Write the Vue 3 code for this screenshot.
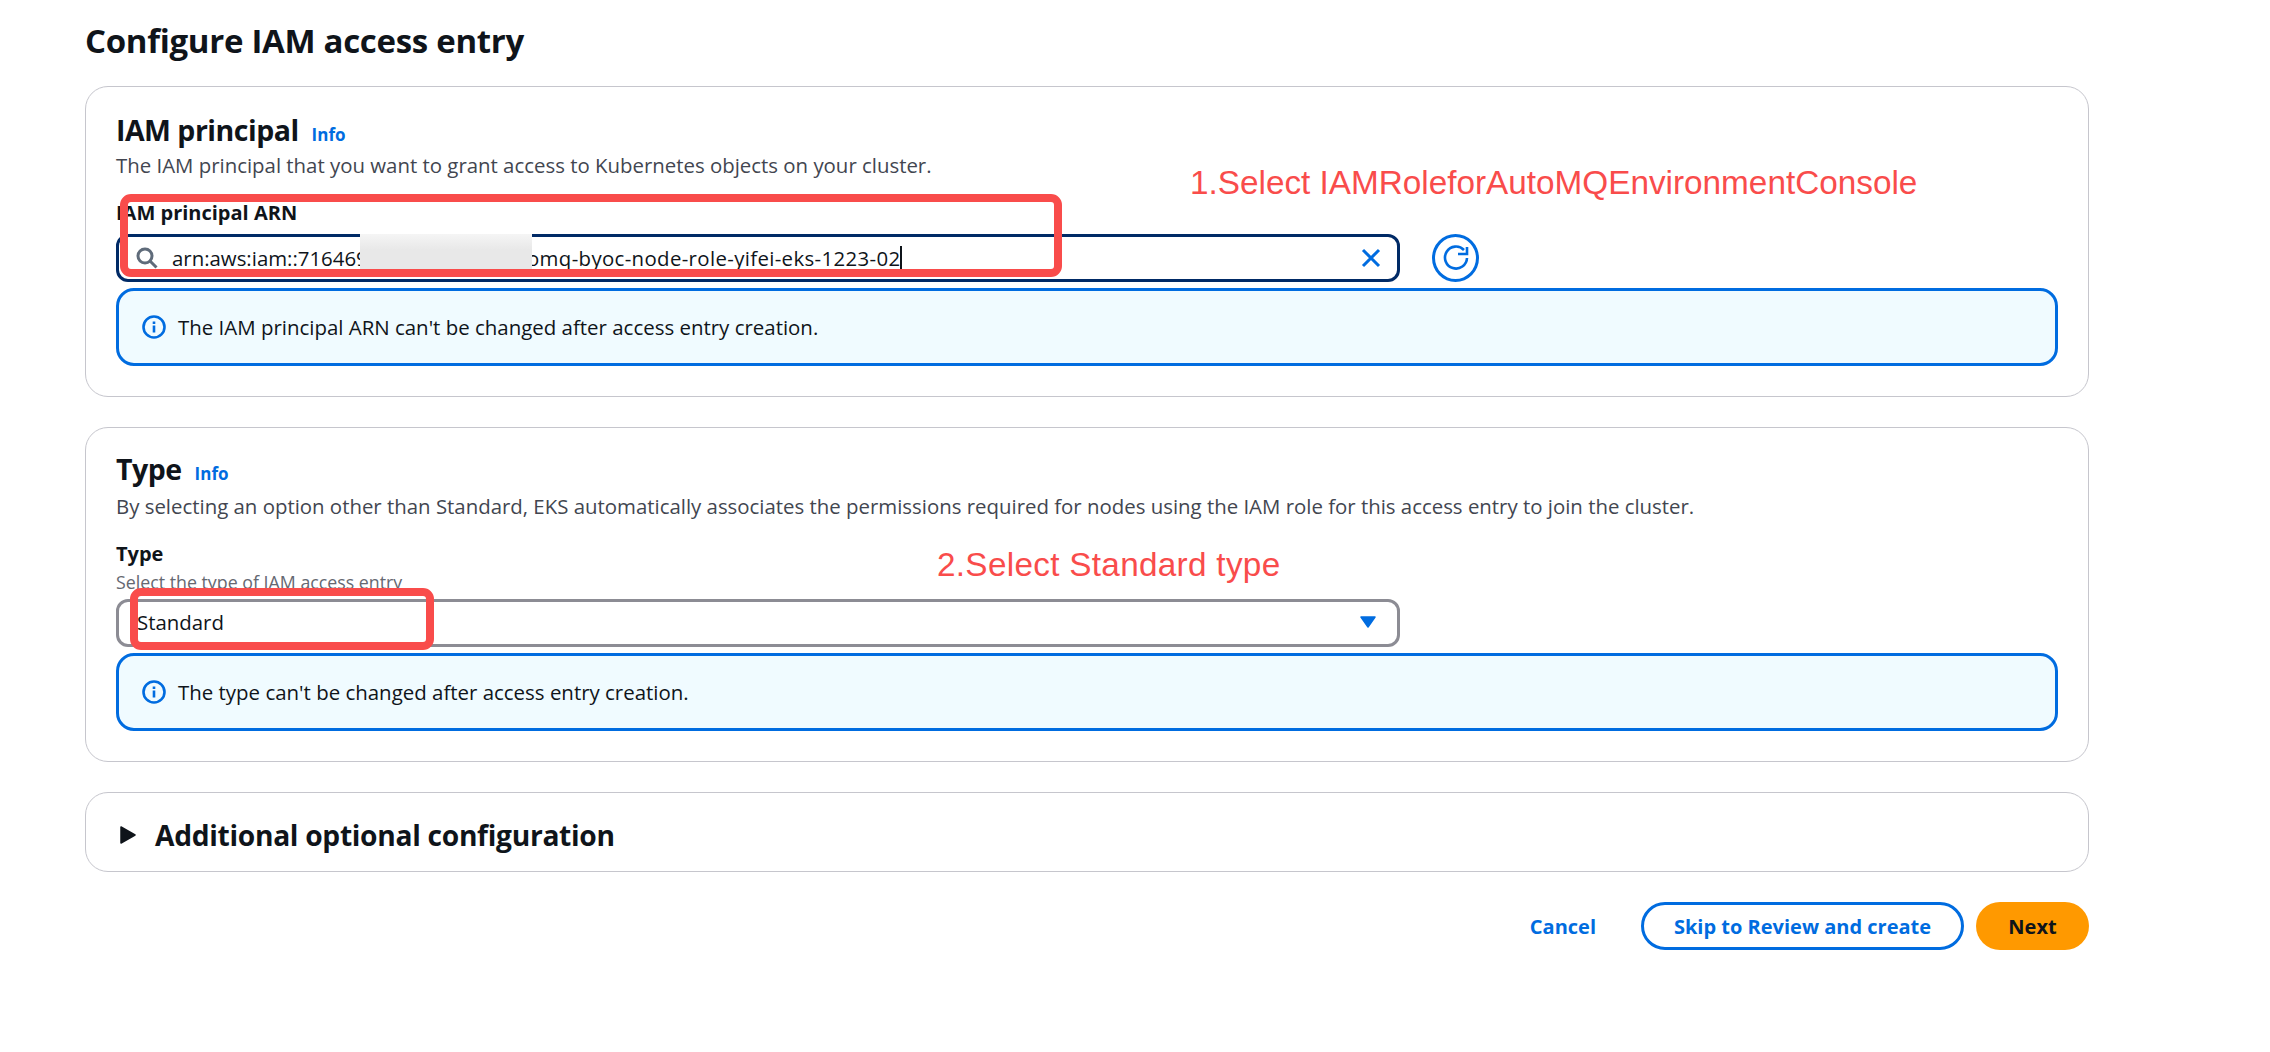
<script setup>
const alertIconPath = 'M12 10.5v7M12 6.5v2.4'
</script>

<template>
  <main class="page">
    <h1 class="title">Configure IAM access entry</h1>

    <section class="card card-principal">
      <div class="heading"><h2>IAM principal</h2><a class="info">Info</a></div>
      <p class="desc">The IAM principal that you want to grant access to Kubernetes objects on your cluster.</p>
      <div class="label label-arn">IAM principal ARN</div>
      <div class="input-row">
        <div class="input">
          <svg class="search" viewBox="0 0 22 22" width="22" height="22">
            <circle cx="9" cy="9" r="7" fill="none" stroke="#5f6b7a" stroke-width="3" />
            <path d="M14 14l6.5 6.5" stroke="#5f6b7a" stroke-width="3" fill="none" />
          </svg>
          <span class="arn-a">arn:aws:iam::716469</span><span class="arn-b">omq-byoc-node-role-yifei-eks-1223-02</span><span class="caret"></span>
          <svg class="clear" viewBox="0 0 20 20" width="20" height="20">
            <path d="M2 2l16 16M18 2L2 18" stroke="#006ce0" stroke-width="3" fill="none" />
          </svg>
        </div>
        <div class="refresh">
          <svg viewBox="0 0 30 30" width="30" height="30">
            <path d="M23 7A11 11 0 1 0 26 15" fill="none" stroke="#006ce0" stroke-width="2.6" />
            <path d="M17 11h9V4" fill="none" stroke="#006ce0" stroke-width="2.6" />
          </svg>
        </div>
      </div>
      <div class="alert">
        <svg viewBox="0 0 24 24" width="24" height="24">
          <circle cx="12" cy="12" r="10.5" fill="none" stroke="#006ce0" stroke-width="2.6" />
          <path :d="alertIconPath" stroke="#006ce0" stroke-width="2.6" fill="none" />
        </svg>
        <span>The IAM principal ARN can't be changed after access entry creation.</span>
      </div>
    </section>

    <section class="card card-type">
      <div class="heading"><h2>Type</h2><a class="info">Info</a></div>
      <p class="desc">By selecting an option other than Standard, EKS automatically associates the permissions required for nodes using the IAM role for this access entry to join the cluster.</p>
      <div class="label label-type">Type</div>
      <div class="sublabel">Select the type of IAM access entry</div>
      <div class="select">
        <span>Standard</span>
        <svg viewBox="0 0 16 12" width="16" height="12"><path d="M1 1h14L8 11z" fill="#006ce0" stroke="#006ce0" stroke-width="1.5" stroke-linejoin="round" /></svg>
      </div>
      <div class="alert">
        <svg viewBox="0 0 24 24" width="24" height="24">
          <circle cx="12" cy="12" r="10.5" fill="none" stroke="#006ce0" stroke-width="2.6" />
          <path :d="alertIconPath" stroke="#006ce0" stroke-width="2.6" fill="none" />
        </svg>
        <span>The type can't be changed after access entry creation.</span>
      </div>
    </section>

    <section class="card card-extra">
      <svg viewBox="0 0 16 18" width="16" height="18"><path d="M1 1l14 8L1 17z" fill="#0f141a" stroke="#0f141a" stroke-width="1.5" stroke-linejoin="round" /></svg>
      <h2>Additional optional configuration</h2>
    </section>

    <footer class="actions">
      <a class="cancel">Cancel</a>
      <button class="btn btn-skip">Skip to Review and create</button>
      <button class="btn btn-next">Next</button>
    </footer>

    <div class="blur"></div>
    <div class="mark mark-1"></div>
    <div class="mark mark-2"></div>
    <div class="note note-1">1.Select IAMRoleforAutoMQEnvironmentConsole</div>
    <div class="note note-2">2.Select Standard type</div>
  </main>
</template>

<style scoped>
.page {
  position: relative;
  box-sizing: border-box;
  width: 2270px;
  height: 1052px;
  padding: 21px 181px 0 85px;
  background: #fff;
  color: #0f141a;
  font-family: "Open Sans", "Noto Sans", sans-serif;
  overflow: hidden;
}
h1, h2, p { margin: 0; }
.title {
  height: 65px;
  line-height: 40px;
  font-size: 33px;
  font-weight: 700;
  letter-spacing: -0.3px;
}
.card {
  box-sizing: border-box;
  border: 1.5px solid #c6c6cd;
  border-radius: 23px;
  padding: 0 30px;
  margin-bottom: 30px;
}
.card-principal { height: 311px; padding-top: 23px; }
.card-type { height: 335px; padding-top: 21px; }
.card-extra {
  height: 80px;
  display: flex;
  align-items: center;
  gap: 19px;
  padding-left: 34px;
  padding-top: 6px;
}
.card-extra h2 { font-size: 28.2px; font-weight: 700; line-height: 40px; letter-spacing: -0.3px; }
.heading { display: flex; align-items: center; height: 40px; }
.heading h2 { font-size: 28.5px; font-weight: 700; letter-spacing: -0.5px; }
.info { margin-left: 13px; margin-top: 8px; color: #006ce0; font-size: 17px; font-weight: 700; }
.desc { height: 30px; line-height: 30px; font-size: 20.4px; color: #424650; }
.card-type .desc { margin-top: 2px; }
.label { height: 30px; line-height: 30px; font-size: 20px; font-weight: 700; }
.label-arn { margin-top: 17.5px; margin-bottom: 6px; }
.label-type { margin-top: 18px; }
.sublabel { height: 26px; line-height: 26px; margin-bottom: 3.5px; font-size: 17.8px; color: #656871; }
.input-row { display: flex; gap: 32px; }
.input {
  box-sizing: border-box;
  display: flex;
  align-items: center;
  width: 1284px;
  height: 48px;
  border: 3px solid #002a66;
  border-radius: 12px;
  padding: 0 17px;
  font-size: 20.4px;
}
.search { flex: none; margin-right: 14px; }
.arn-a { display: block; width: 192px; white-space: nowrap; }
.arn-b { margin-left: 163px; white-space: nowrap; letter-spacing: 0.35px; }
.caret { width: 2px; height: 24px; background: #0f141a; }
.clear { margin-left: auto; margin-right: -1px; }
.refresh {
  box-sizing: border-box;
  width: 47px;
  height: 48px;
  border: 3px solid #006ce0;
  border-radius: 50%;
  display: flex;
  align-items: center;
  justify-content: center;
}
.alert {
  box-sizing: border-box;
  display: flex;
  align-items: center;
  gap: 12px;
  height: 78px;
  margin-top: 6px;
  padding-left: 23px;
  border: 3px solid #006ce0;
  border-radius: 18px;
  background: #f0fbff;
  font-size: 20.45px;
}
.select {
  box-sizing: border-box;
  display: flex;
  align-items: center;
  justify-content: space-between;
  width: 1284px;
  height: 48px;
  border: 3px solid #8c8c94;
  border-radius: 12px;
  padding: 0 21px 2px 18px;
  font-size: 20.4px;
}
.actions { display: flex; align-items: center; justify-content: flex-end; }
.cancel { margin-right: 45px; color: #006ce0; font-size: 20px; font-weight: 700; }
.btn {
  box-sizing: border-box;
  height: 48px;
  border-radius: 24px;
  font-family: inherit;
  font-size: 20px;
  font-weight: 700;
}
.btn-skip { width: 323px; border: 3px solid #006ce0; background: #fff; color: #006ce0; margin-right: 12px; }
.btn-next { width: 113px; border: 0; background: #ff9900; color: #0f141a; }
.blur {
  position: absolute;
  left: 360px;
  top: 234px;
  width: 172px;
  height: 40px;
  background: linear-gradient(180deg, #f5f5f5, #e8e8e8 40%);
}
.mark {
  position: absolute;
  box-sizing: border-box;
  border: 8px solid #f94c4b;
  border-radius: 11px;
}
.mark-1 { left: 120px; top: 194px; width: 942px; height: 83px; }
.mark-2 { left: 130px; top: 588px; width: 304px; height: 62px; }
.note { position: absolute; color: #f94c4b; font-family: "Liberation Sans", Arial, sans-serif; font-size: 33.3px; line-height: 40px; white-space: nowrap; }
.note-1 { left: 1190px; top: 163px; }
.note-2 { left: 937px; top: 545px; letter-spacing: 0.3px; }
</style>
